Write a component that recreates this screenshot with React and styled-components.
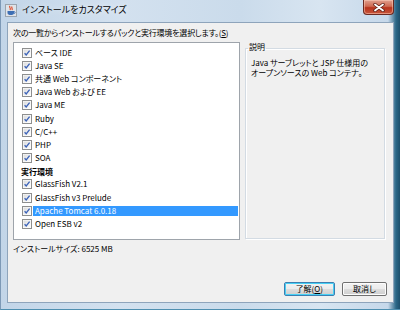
import React from "react";
import styled, { createGlobalStyle } from "styled-components";

const items = [
  { label: "ベース IDE" },
  { label: "Java SE" },
  { label: "共通 Web コンポーネント" },
  { label: "Java Web および EE" },
  { label: "Java ME" },
  { label: "Ruby" },
  { label: "C/C++" },
  { label: "PHP" },
  { label: "SOA" },
  { header: "実行環境" },
  { label: "GlassFish V2.1" },
  { label: "GlassFish v3 Prelude" },
  { label: "Apache Tomcat 6.0.18", selected: true },
  { label: "Open ESB v2" },
];

const App = () => {
  return (
    <>
      <Global />
      <Window>
        <TitleBar>
          <JavaIcon />
          <TitleText>インストールをカスタマイズ</TitleText>
          <CloseButton>
            <svg width="12" height="9" viewBox="0 0 12 9">
              <path
                d="M2 1.5 L10 7.5 M10 1.5 L2 7.5"
                stroke="#5a1d14"
                strokeWidth="3.4"
                strokeLinecap="round"
              />
              <path
                d="M2 1.5 L10 7.5 M10 1.5 L2 7.5"
                stroke="#fff"
                strokeWidth="1.8"
                strokeLinecap="round"
              />
            </svg>
          </CloseButton>
        </TitleBar>
        <Frame>
          <Body>
            <Prompt>
              次の一覧からインストールするパックと実行環境を選択します。(<u>S</u>)
            </Prompt>
            <Main>
              <List>
                {items.map((it, i) =>
                  it.header ? (
                    <Header key={i}>{it.header}</Header>
                  ) : (
                    <Row key={i}>
                      <Check />
                      <Label selected={it.selected}>{it.label}</Label>
                    </Row>
                  )
                )}
              </List>
              <Description>
                <legend>説明</legend>
                <p>
                  Java サーブレットと JSP 仕様用の
                  <br />
                  オープンソースの Web コンテナ。
                </p>
              </Description>
            </Main>
            <SizeLabel>インストールサイズ: 6525 MB</SizeLabel>
            <Buttons>
              <Button primary>
                了解(<u>O</u>)
              </Button>
              <Button>取消し</Button>
            </Buttons>
          </Body>
        </Frame>
      </Window>
    </>
  );
};

export default App;

const JavaIcon = () => (
  <IconBox>
    <svg width="12" height="13" viewBox="0 0 12 13">
      <rect x="0.5" y="0.5" width="11" height="12" fill="#dfe3e8" stroke="#9aa4ae" />
      <path d="M5 2 C3.5 3.5 6.5 4 5 6 M7 2.5 C6 4 8 4.5 7 6" stroke="#e0401c" strokeWidth="1.1" fill="none" />
      <path d="M2.5 7 H9 V9 C9 10.5 7.5 11 5.8 11 C4 11 2.5 10.5 2.5 9 Z" fill="#3d6fb4" />
      <path d="M9 7.5 C10.5 7.5 10.5 9.5 9 9.5" stroke="#3d6fb4" strokeWidth="0.9" fill="none" />
    </svg>
  </IconBox>
);

const Check = () => (
  <CheckBox>
    <svg width="10" height="10" viewBox="0 0 10 10">
      <defs>
        <linearGradient id="cbg" x1="0" y1="0" x2="1" y2="1">
          <stop offset="0" stopColor="#dcdcdc" />
          <stop offset="1" stopColor="#fbfbfb" />
        </linearGradient>
      </defs>
      <rect x="0.5" y="0.5" width="9" height="9" fill="#fff" stroke="#8e8f8f" />
      <rect x="1.5" y="1.5" width="7" height="7" fill="url(#cbg)" />
      <path d="M2.6 5.2 L4.2 7 L7.6 2.6" stroke="#3b62b8" strokeWidth="1.3" fill="none" />
    </svg>
  </CheckBox>
);

const Global = createGlobalStyle`
  html, body {
    margin: 0;
    padding: 0;
    overflow: hidden;
    background: #7fa6c4;
  }
  body {
    font-family: "Noto Sans CJK JP", "Liberation Sans", sans-serif;
    font-feature-settings: "palt";
  }
`;

const Window = styled.div`
  width: 400px;
  height: 310px;
  display: flex;
  flex-direction: column;
  box-sizing: border-box;
  background: linear-gradient(
    to right,
    #c2d5e8 0%,
    #d3e1ef 30%,
    #cadbeb 60%,
    #d8e5f1 80%,
    #c6d8ea 97%,
    #2b6787 99%,
    #1d4f6c 100%
  );
  border-left: 1px solid #7d99b6;
  border-bottom: 1px solid #4f8fb0;
`;

const TitleBar = styled.div`
  height: 22px;
  flex-shrink: 0;
  display: flex;
  align-items: flex-start;
  position: relative;
  padding-left: 4px;
`;

const IconBox = styled.div`
  margin-top: 4px;
  width: 12px;
  height: 13px;
  display: flex;
`;

const TitleText = styled.div`
  margin-left: 5px;
  margin-top: 3px;
  font-size: 9px;
  line-height: 14px;
  color: #000;
  text-shadow: 0 0 6px rgba(255, 255, 255, 0.9);
`;

const CloseButton = styled.div`
  position: absolute;
  top: 0;
  right: 6px;
  width: 31px;
  height: 15px;
  box-sizing: border-box;
  border: 1px solid #6b2a22;
  border-top: none;
  border-radius: 0 0 4px 4px;
  background: linear-gradient(to bottom, #e0a08f 0%, #cf6a52 45%, #b8331c 55%, #c7563c 100%);
  box-shadow: inset 0 0 0 1px rgba(255, 210, 190, 0.5);
  display: flex;
  align-items: center;
  justify-content: center;
`;

const Frame = styled.div`
  flex: 1;
  display: flex;
  padding: 0 6px 6px 6px;
`;

const Body = styled.div`
  flex: 1;
  display: flex;
  flex-direction: column;
  background: #f0f0f0;
  border: 1px solid #8ea4bb;
  padding: 4px 6px 6px 5px;
  font-size: 8px;
  color: #000;
`;

const Prompt = styled.div`
  line-height: 12px;
  white-space: nowrap;
  letter-spacing: -0.2px;
  u {
    text-decoration: underline;
  }
`;

const Main = styled.div`
  display: grid;
  grid-template-columns: 227px 140px;
  column-gap: 5px;
  margin-top: 3px;
  height: 198px;
`;

const List = styled.div`
  background: #fff;
  border: 1px solid #9ea4ab;
  box-sizing: border-box;
  padding: 3px 1px 0 0;
  display: flex;
  flex-direction: column;
`;

const Row = styled.div`
  height: 13.2px;
  display: flex;
  align-items: center;
  padding-left: 8px;
`;

const CheckBox = styled.span`
  width: 10px;
  height: 10px;
  display: flex;
  flex-shrink: 0;
`;

const Label = styled.span`
  flex: 1;
  margin-left: 1px;
  padding-left: 2px;
  height: 10px;
  line-height: 10px;
  white-space: nowrap;
  background: ${({ selected }) => (selected ? "#3399ff" : "transparent")};
  color: ${({ selected }) => (selected ? "#fff" : "#000")};
`;

const Header = styled.div`
  height: 13.2px;
  line-height: 13.2px;
  padding-left: 7px;
  font-weight: bold;
`;

const Description = styled.fieldset`
  margin: 0 0 1px 0;
  padding: 4px 2px;
  min-width: 0;
  border: 1px solid #d3dbe3;
  box-shadow: 1px 1px 0 #fff, inset 1px 1px 0 #fff;
  legend {
    padding: 0 1px 3px 1px;
    line-height: 9px;
    font-size: 8px;
  }
  p {
    margin: 0 0 0 3px;
    line-height: 10px;
    white-space: nowrap;
  }
`;

const SizeLabel = styled.div`
  margin-top: 3px;
  line-height: 12px;
`;

const Buttons = styled.div`
  margin-top: auto;
  display: flex;
  justify-content: flex-end;
  gap: 7px;
`;

const Button = styled.div`
  height: 14px;
  box-sizing: border-box;
  padding: 0 ${({ primary }) => (primary ? "11px" : "9px")};
  min-width: ${({ primary }) => (primary ? "50px" : "45px")};
  display: flex;
  align-items: center;
  justify-content: center;
  font-size: 8px;
  line-height: 12px;
  border-radius: 2px;
  border: 1px solid ${({ primary }) => (primary ? "#3c7fb1" : "#707070")};
  background: linear-gradient(to bottom, #f2f2f2 0%, #ebebeb 50%, #dddddd 51%, #cfcfcf 100%);
  box-shadow: inset 0 0 0 1px ${({ primary }) => (primary ? "#48d0f5" : "#fcfcfc")};
  u {
    text-decoration: underline;
  }
`;
